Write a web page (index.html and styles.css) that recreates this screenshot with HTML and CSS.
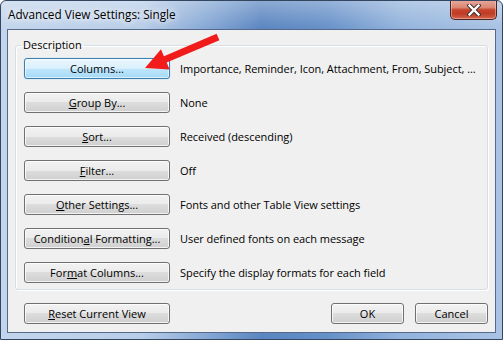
FILE: index.html
```html
<!DOCTYPE html>
<html>
<head>
<meta charset="utf-8">
<link rel="stylesheet" href="styles.css">
</head>
<body>
<div class="window">
  <div class="titlebar">
    <span class="title">Advanced View Settings: Single</span>
    <div class="close">
      <svg width="14" height="12" viewBox="0 0 14 12">
        <path d="M2.5 1.5 L11.5 10.5 M11.5 1.5 L2.5 10.5" stroke="#3a2a2a" stroke-width="4.2" stroke-linecap="square"/>
        <path d="M2.5 1.5 L11.5 10.5 M11.5 1.5 L2.5 10.5" stroke="#ffffff" stroke-width="2.4" stroke-linecap="square"/>
      </svg>
    </div>
  </div>
  <div class="client">
    <fieldset class="group">
      <legend class="legend">Description</legend>
      <div class="rows">
        <div class="row"><button class="btn hot">Columns...</button><span class="desc">Importance, Reminder, Icon, Attachment, From, Subject, ...</span></div>
        <div class="row"><button class="btn"><u>G</u>roup By...</button><span class="desc">None</span></div>
        <div class="row"><button class="btn"><u>S</u>ort...</button><span class="desc">Received (descending)</span></div>
        <div class="row"><button class="btn"><u>F</u>ilter...</button><span class="desc">Off</span></div>
        <div class="row"><button class="btn"><u>O</u>ther Settings...</button><span class="desc">Fonts and other Table View settings</span></div>
        <div class="row"><button class="btn">Condition<u>a</u>l Formatting...</button><span class="desc">User defined fonts on each message</span></div>
        <div class="row"><button class="btn">For<u>m</u>at Columns...</button><span class="desc">Specify the display formats for each field</span></div>
      </div>
    </fieldset>
    <div class="footer">
      <button class="btn"><u>R</u>eset Current View</button>
      <div class="spacer"></div>
      <button class="btn small">OK</button>
      <button class="btn small">Cancel</button>
    </div>
  </div>
  <svg class="arrow" width="503" height="340" viewBox="0 0 503 340">
    <polygon points="145,68 161,49.2 163.9,56.2 216.6,33.8 219.4,40.2 166.7,62.6 169.6,69.6" fill="#f21b1b"/>
  </svg>
</div>
</body>
</html>
```
FILE: styles.css
```css
html, body {
  margin: 0;
  padding: 0;
  background: #ffffff;
}

.window {
  position: relative;
  width: 503px;
  height: 340px;
  box-sizing: border-box;
  display: flex;
  flex-direction: column;
  border: 1px solid #34465f;
  border-radius: 6px 6px 0 0;
  overflow: hidden;
  font-family: "Open Sans", "Noto Sans", sans-serif;
  font-size: 11px;
  color: #000;
  background:
    linear-gradient(180deg, rgba(255,255,255,0.3) 0px, rgba(255,255,255,0) 28px, rgba(255,255,255,0) 100%),
    linear-gradient(90deg, #c3d5ec 0%, #b8cde8 28%, #82a5d3 42%, #5a85c0 52%, #6690c8 65%, #93b3dc 80%, #a9c3e4 100%);
}

.titlebar {
  height: 28px;
  display: flex;
  align-items: flex-start;
  flex-shrink: 0;
}

.title {
  padding: 5px 0 0 7px;
  font-size: 11.75px;
  line-height: 16px;
  text-shadow: 0 0 6px rgba(255,255,255,0.95), 0 0 10px rgba(255,255,255,0.8);
}

.close {
  margin-left: auto;
  margin-right: 5px;
  margin-top: -1px;
  width: 47px;
  height: 20px;
  box-sizing: border-box;
  border: 1px solid #4a2320;
  border-top: none;
  border-radius: 0 0 5px 5px;
  background: linear-gradient(180deg, #e8aa9e 0%, #db8673 40%, #c6432b 52%, #bf3d26 72%, #d5644a 100%);
  box-shadow: inset 0 0 0 1px rgba(255,220,210,0.45);
  display: flex;
  align-items: center;
  justify-content: center;
}

.client {
  flex: 1;
  margin: 0 6px 6px 6px;
  border: 1px solid #55698a;
  background: #f0f0f0;
  display: flex;
  flex-direction: column;
  padding: 0 7px 8px 0;
}

.group {
  margin: 7px 0 0 7px;
  padding: 5px 8px 6px 8px;
  border: 1px solid #d5dfe5;
  border-radius: 3px;
  box-shadow: inset 1px 1px 0 #fff, 1px 1px 0 #fff;
  min-width: 0;
}

.legend {
  padding: 0 2px;
  margin-left: -3px;
  font-size: 11px;
  line-height: 16px;
}

.rows {
  display: flex;
  flex-direction: column;
  gap: 13px;
}

.row {
  display: flex;
  align-items: center;
  gap: 10px;
}

.desc {
  white-space: nowrap;
  line-height: 16px;
  letter-spacing: -0.05px;
}

.btn {
  width: 146px;
  height: 21px;
  padding: 0;
  box-sizing: border-box;
  border: 1px solid #707070;
  border-radius: 3px;
  background: linear-gradient(180deg, #f2f2f2 0%, #ebebeb 50%, #dddddd 50%, #cfcfcf 100%);
  box-shadow: inset 0 0 0 1px rgba(255,255,255,0.75);
  font-family: inherit;
  font-size: 11px;
  line-height: 16px;
  color: #000;
  flex-shrink: 0;
}

.btn.hot {
  border-color: #3c7fb1;
  background: linear-gradient(180deg, #eaf6fd 0%, #d9f0fc 50%, #bee6fd 50%, #a7d9f5 100%);
  box-shadow: inset 0 0 0 1px rgba(255,255,255,0.6), 0 0 1px #6cc2ee;
}

.btn.small {
  width: 73px;
}

.footer {
  display: flex;
  align-items: center;
  gap: 11px;
  margin-top: 13px;
  padding-left: 16px;
}

.spacer {
  flex: 1;
}

.arrow {
  position: absolute;
  left: -1px;
  top: -1px;
  pointer-events: none;
}
```
